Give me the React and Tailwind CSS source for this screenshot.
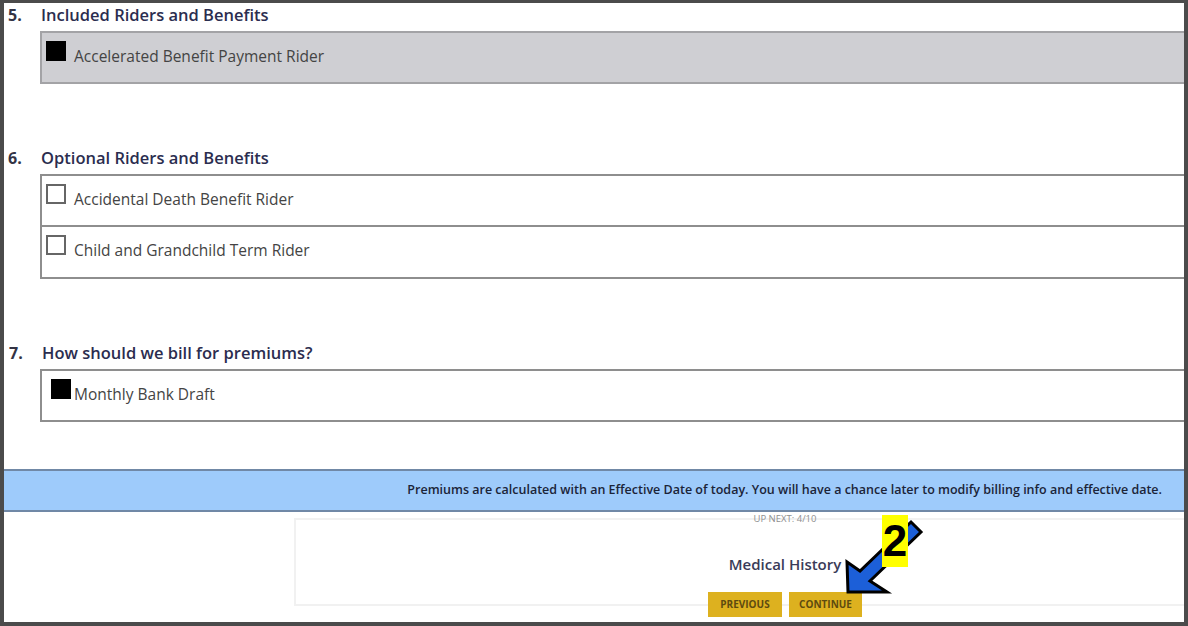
import React from 'react';

const font = { fontFamily: '"Open Sans", Lato, sans-serif' };

const Heading = ({ num, children, numClass = 'ml-[4px]' }) => (
  <div className="flex items-center h-[32px]">
    <span className={`${numClass} w-[33px] text-[16px] font-bold text-[#333344]`}>{num}</span>
    <span className="text-[16.5px] font-semibold text-[#2b2d4f]">{children}</span>
  </div>
);

const FilledBox = () => <span className="block w-[20px] h-[20px] bg-black shrink-0" />;
const EmptyBox = () => <span className="block w-[20px] h-[20px] border-2 border-[#666] bg-white shrink-0" />;

const Row = ({ children, label, gap = 'ml-[8px]', className = '' }) => (
  <div className={`flex items-start pt-[8px] pl-[4px] ${className}`}>
    {children}
    <span className={`${gap} mt-[5px] leading-[20px] text-[15.5px] text-[#444]`}>{label}</span>
  </div>
);

const App = () => {
  return (
    <div style={font} className="w-[1188px] h-[626px] bg-[#4b4b4b] pl-[4px] pt-[3px] pr-[4px] pb-[4px]">
      <div className="relative h-full bg-white overflow-hidden">
        {/* 5 */}
        <div className="-mt-[4px]">
          <Heading num="5.">Included Riders and Benefits</Heading>
          <div className="ml-[36px] w-[1160px] border-2 border-[#a3a3a6] bg-[#cfcfd3]">
            <Row label="Accelerated Benefit Payment Rider" className="h-[49px]">
              <FilledBox />
            </Row>
          </div>
        </div>

        {/* 6 */}
        <div className="mt-[58px]">
          <Heading num="6.">Optional Riders and Benefits</Heading>
          <div className="ml-[36px] w-[1160px] border-2 border-[#8e8e8e]">
            <Row label="Accidental Death Benefit Rider" className="h-[51px] border-b-2 border-[#8e8e8e]">
              <EmptyBox />
            </Row>
            <Row label="Child and Grandchild Term Rider" className="h-[50px]">
              <EmptyBox />
            </Row>
          </div>
        </div>

        {/* 7 */}
        <div className="mt-[58px]">
          <Heading num="7." numClass="ml-[5px]">How should we bill for premiums?</Heading>
          <div className="ml-[36px] w-[1160px] border-2 border-[#8e8e8e]">
            <Row label="Monthly Bank Draft" gap="ml-[3px]" className="h-[49px] pl-[9px]">
              <FilledBox />
            </Row>
          </div>
        </div>

        {/* banner */}
        <div className="mt-[47px] h-[43px] bg-[#9ecbfb] border-y-2 border-[#7088a6] flex items-center justify-end pr-[22px]">
          <span className="text-[12.5px] font-semibold text-[#1b2438]">
            Premiums are calculated with an Effective Date of today. You will have a chance later to modify billing info and effective date.
          </span>
        </div>

        {/* up next */}
        <div className="mt-[6px] ml-[290px] w-[982px] h-[88px] border-2 border-[#f1f1f1] flex flex-col items-center">
          <span className="-mt-[8px] h-[13px] leading-[13px] text-[9.5px] text-[#8f8f8f]">UP NEXT: 4/10</span>
          <span className="mt-[29px] text-[15px] font-semibold text-[#3a3b58] leading-[20px]">Medical History</span>
          <div className="mt-[18px] flex gap-[7px]">
            <button className="w-[74px] h-[25px] bg-[#ddb11f] text-[10px] font-bold text-[#5e4b10]">PREVIOUS</button>
            <button className="w-[73px] h-[25px] bg-[#ddb11f] text-[10px] font-bold text-[#5e4b10]">CONTINUE</button>
          </div>
        </div>

        {/* annotation arrow */}
        <svg className="absolute left-[831px] top-[507px]" width="95" height="95" viewBox="0 0 95 95">
          <polygon
            points="13,82 12,52 25,61 76,12 86,22 35,71 52,82"
            fill="#1c5fd8"
            stroke="#000"
            strokeWidth="3"
            strokeLinejoin="miter"
          />
        </svg>
        <div className="absolute left-[878px] top-[512px] w-[26px] h-[52px] bg-[#ffff00] flex items-center justify-center">
          <span className="text-[44px] font-bold text-black leading-none" style={{ fontFamily: '"Liberation Sans", Arial, sans-serif' }}>2</span>
        </div>
      </div>
    </div>
  );
};

export default App;
